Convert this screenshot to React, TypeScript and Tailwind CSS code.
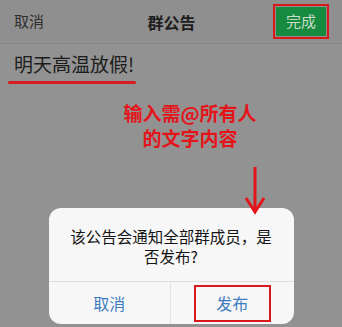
export default function App() {
  return (
    <div className="w-[342px] h-[327px] overflow-hidden bg-[#929292] font-['Noto_Sans_CJK_SC',sans-serif] flex flex-col">
      {/* Nav bar */}
      <div className="h-[44px] shrink-0 grid grid-cols-[1fr_auto_1fr] items-center pl-[14px] pr-[13px] bg-[#8f8f8f] border-b border-[#878787]">
        <span className="text-[15px] text-[#2e2e2e]">取消</span>
        <span className="text-[16px] font-bold text-[#1e1e1e]">群公告</span>
        <div className="justify-self-end border-2 border-[#d7191c] p-[1px]">
          <div className="w-[50px] h-[29px] bg-[#168a3f] flex items-center justify-center text-[15px] text-[#c9dcc9]">
            完成
          </div>
        </div>
      </div>

      {/* Announcement text */}
      <div className="pl-[14px] pt-[8px] text-[19px] leading-[24px] text-[#1c1c1c]">
        明天高温放假!
      </div>
      <div className="ml-[8px] mt-[5px] h-[3px] w-[128px] bg-[#d81b20] rounded-full" />

      {/* Annotation */}
      <div className="pl-[38px] mt-[16px] text-center text-[19px] leading-[25px] font-bold text-[#e3151b]">
        <div>输入需@所有人</div>
        <div>的文字内容</div>
      </div>

      {/* Arrow + dialog */}
      <div className="relative mt-[17px] flex flex-col">
        <div className="flex justify-end pr-[76px] relative z-10">
          <svg width="22" height="48" viewBox="0 0 22 48">
            <line x1="11" y1="0" x2="11" y2="44" stroke="#e3151b" strokeWidth="3" />
            <polyline points="2,31 11,45 20,31" fill="none" stroke="#e3151b" strokeWidth="3" />
          </svg>
        </div>
        <div className="mx-auto -mt-[7px] w-[245px] h-[116px] rounded-[12px] bg-[#f7f7f7] flex flex-col">
          <div className="h-[73px] flex items-center justify-center text-center text-[15.5px] leading-[20px] text-[#151515] pt-[3px]">
            <div>
              该公告会通知全部群成员，是
              <br />
              否发布?
            </div>
          </div>
          <div className="flex-1 grid grid-cols-2 border-t border-[#dedede]">
            <div className="flex items-center justify-center text-[16px] text-[#3f7cc0] border-r border-[#e2e2e2]">
              取消
            </div>
            <div className="flex items-center justify-center">
              <div className="w-[77px] h-[37px] border-2 border-[#d7191c] flex items-center justify-center text-[16px] text-[#3f7cc0]">
                发布
              </div>
            </div>
          </div>
        </div>
      </div>
    </div>
  );
}
